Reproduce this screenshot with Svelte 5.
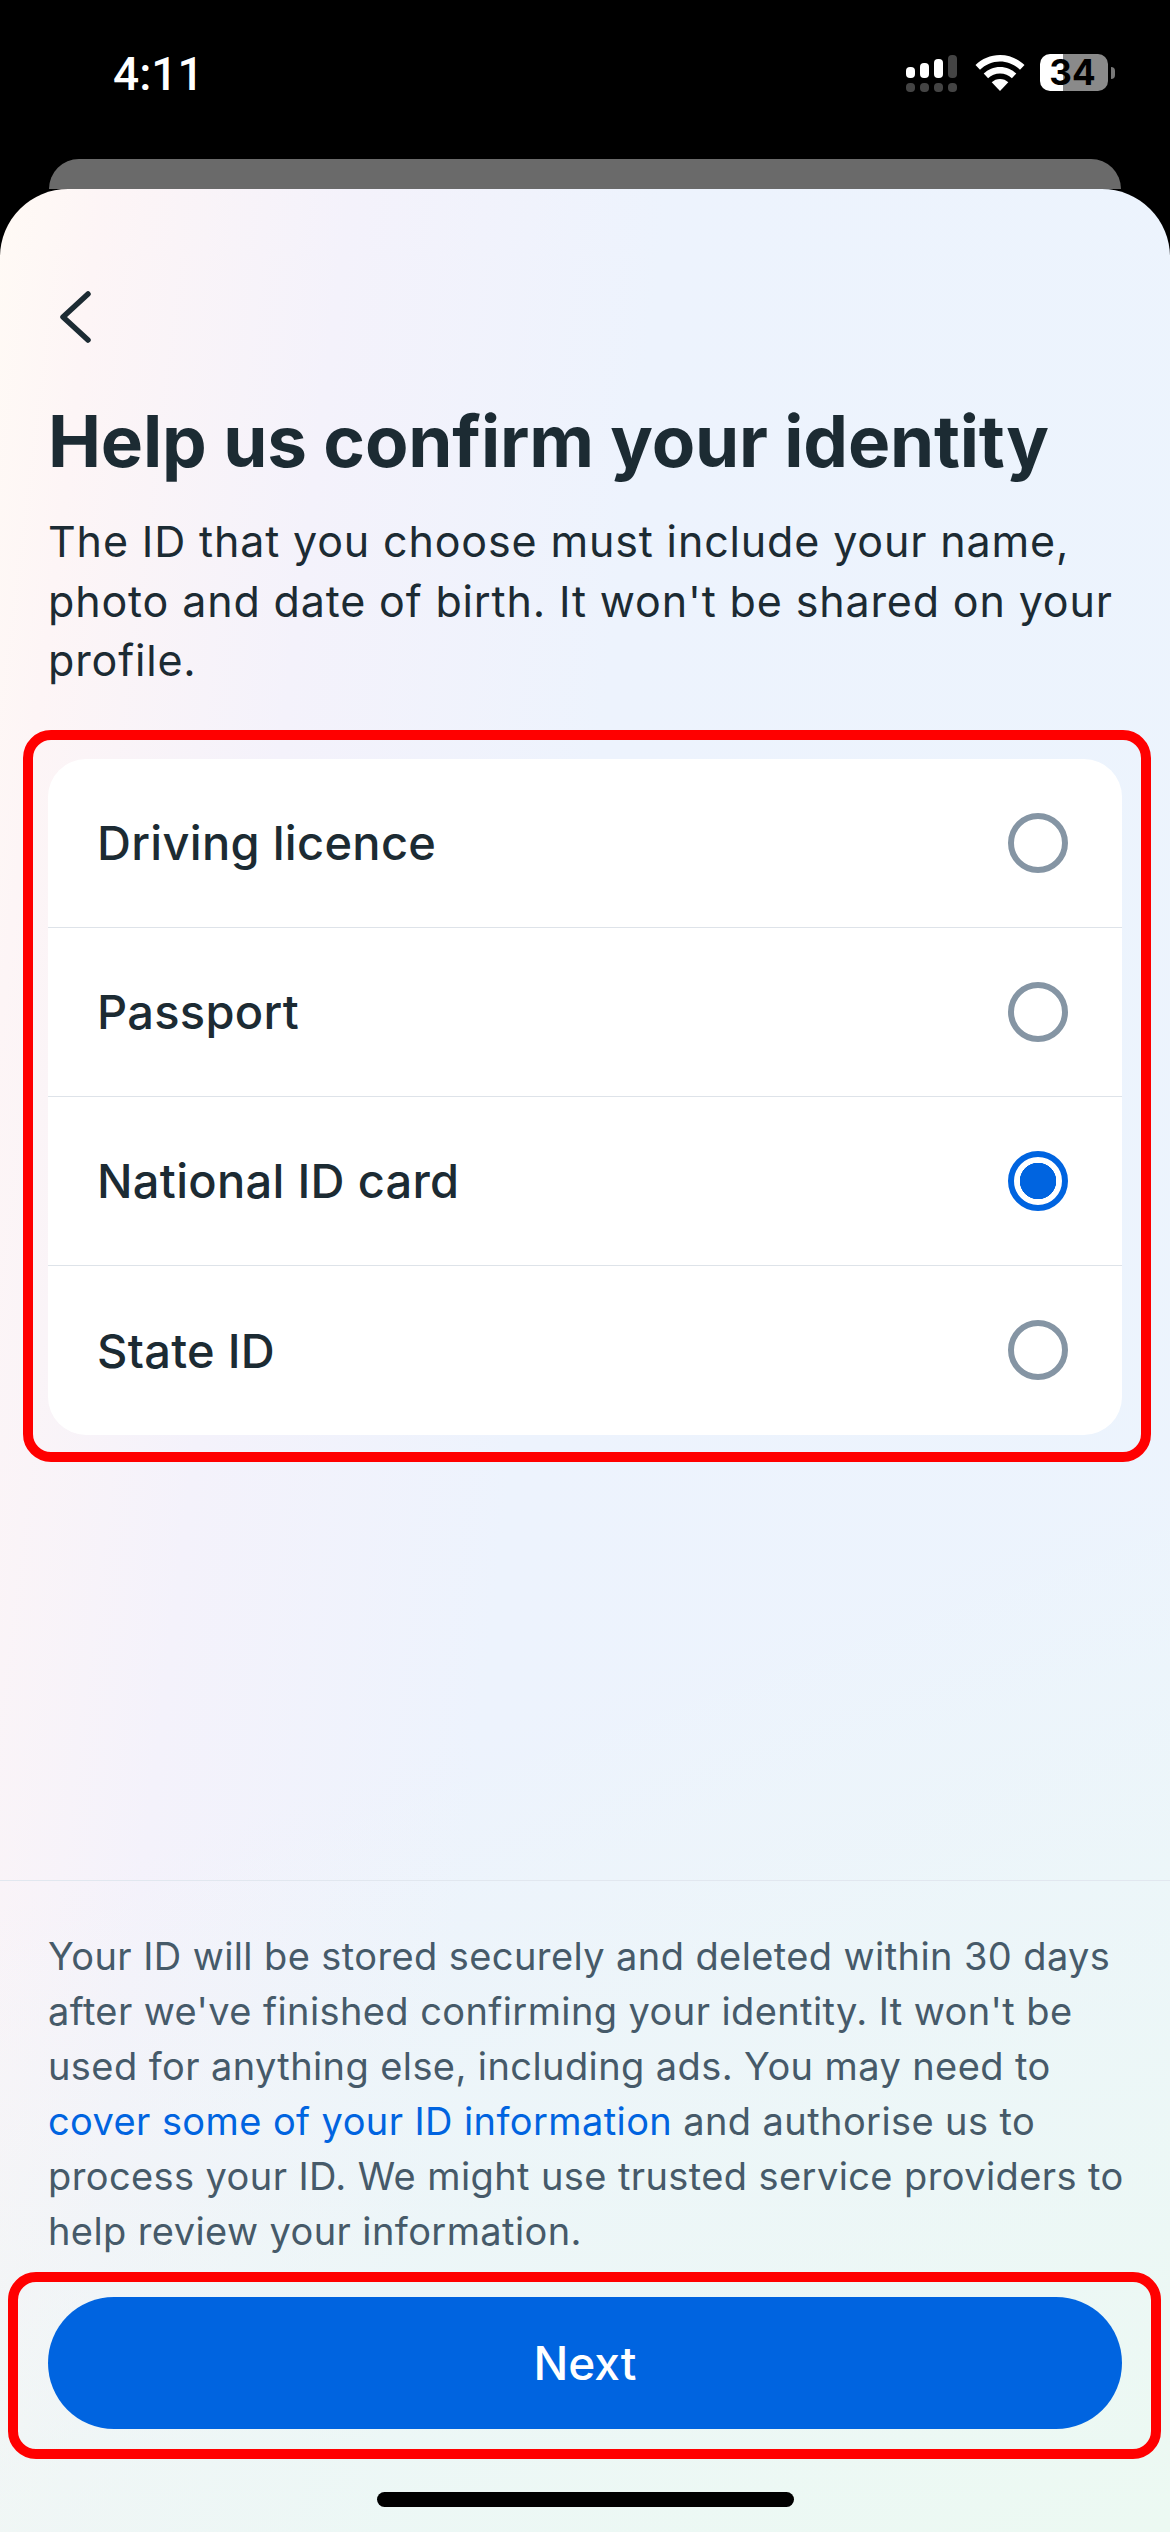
<script>
	let selected = $state('National ID card');
	const options = ['Driving licence', 'Passport', 'National ID card', 'State ID'];
</script>

<div class="screen">
	<header class="status">
		<span class="time">4:11</span>
		<div class="status-icons">
			<svg width="52" height="37" viewBox="0 0 52 37">
				<rect x="0" y="12" width="9" height="11" rx="4" fill="#fff" />
				<rect x="14" y="8" width="9" height="15" rx="4" fill="#fff" />
				<rect x="28" y="4" width="9" height="19" rx="4" fill="#fff" />
				<rect x="42" y="0" width="9" height="23" rx="4" fill="#444" />
				<rect x="0" y="28" width="9" height="9" rx="4" fill="#444" />
				<rect x="14" y="28" width="9" height="9" rx="4" fill="#444" />
				<rect x="28" y="28" width="9" height="9" rx="4" fill="#444" />
				<rect x="42" y="28" width="9" height="9" rx="4" fill="#444" />
			</svg>
			<svg class="wifi" width="50" height="36" viewBox="0 0 50 36">
				<path d="M25 0C15.500 0 7 3.800 0.500 10L5 14.800C10.300 9.700 17.300 6.500 25 6.500S39.700 9.700 45 14.800L49.500 10C43 3.800 34.500 0 25 0Z" fill="#fff" />
				<path d="M25 12C18.700 12 13 14.500 8.700 18.600L13.100 23.300C16.200 20.300 20.400 18.400 25 18.400S33.800 20.300 36.900 23.300L41.300 18.600C37 14.500 31.300 12 25 12Z" fill="#fff" />
				<path d="M25 24C21.800 24 18.900 25.200 16.700 27.300L25 36L33.300 27.300C31.100 25.200 28.200 24 25 24Z" fill="#fff" />
			</svg>
			<div class="battery">
				<div class="battery-body"><span>34</span></div>
				<div class="battery-nub"></div>
			</div>
		</div>
	</header>

	<div class="back-sheet"></div>

	<main class="sheet">
		<div class="content">
			<button class="back" aria-label="Back">
				<svg width="34" height="52" viewBox="0 0 34 52">
					<path d="M30 3L5 26L30 49" fill="none" stroke="#1c2b33" stroke-width="5.500" stroke-linecap="round" stroke-linejoin="round" />
				</svg>
			</button>
			<h1>Help us confirm your identity</h1>
			<p class="intro">The ID that you choose must include your name,<br />photo and date of birth. It won't be shared on your<br />profile.</p>

			<div class="card">
				{#each options as option}
					<button class="row" onclick={() => (selected = option)}>
						<span>{option}</span>
						<span class="radio" class:on={selected === option}></span>
					</button>
				{/each}
			</div>
		</div>

		<footer class="footer">
			<p class="note">Your ID will be stored securely and deleted within 30 days<br />after we've finished confirming your identity. It won't be<br />used for anything else, including ads. You may need to<br /><span class="link">cover some of your ID information</span> and authorise us to<br />process your ID. We might use trusted service providers to<br />help review your information.</p>
			<button class="next">Next</button>
			<div class="home"></div>
		</footer>

		<div class="mark mark-list"></div>
		<div class="mark mark-next"></div>
	</main>
</div>

<style>
	:global(body) {
		margin: 0;
		background: #000;
	}

	.screen {
		width: 1170px;
		height: 2532px;
		background: #000;
		display: flex;
		flex-direction: column;
		overflow: hidden;
		font-family: Inter, "Noto Sans", sans-serif;
	}

	.status {
		height: 159px;
		flex: none;
		box-sizing: border-box;
		padding: 46px 55px 0 113px;
		display: flex;
		justify-content: space-between;
		align-items: flex-start;
		color: #fff;
	}

	.time {
		font-family: Roboto, sans-serif;
		font-size: 46px;
		font-weight: 500;
		line-height: 56px;
	}

	.status-icons {
		display: flex;
		align-items: flex-start;
		padding-top: 9px;
	}

	.wifi {
		margin-left: 17px;
	}

	.battery {
		display: flex;
		align-items: center;
		margin-left: 15px;
		margin-top: -1px;
	}

	.battery-body {
		width: 68px;
		height: 37px;
		border-radius: 10px;
		background: linear-gradient(90deg, #fff 0 23px, #8a8a8a 23px);
		color: #000;
		font-family: Inter, sans-serif;
		font-size: 35px;
		font-weight: 700;
		line-height: 37px;
		text-align: center;
	}

	.battery-body span {
		display: block;
		margin-right: 3px;
	}

	.battery-nub {
		width: 4px;
		height: 12px;
		margin-left: 3px;
		background: #777;
		border-radius: 0 6px 6px 0;
	}

	.back-sheet {
		height: 30px;
		flex: none;
		margin: 0 49px;
		background: #6a6a6a;
		border-radius: 40px 40px 0 0;
	}

	.sheet {
		flex: 1;
		position: relative;
		display: flex;
		flex-direction: column;
		justify-content: space-between;
		border-radius: 68px 68px 0 0;
		background:
			linear-gradient(160deg, rgba(236, 249, 242, 0) 62%, #ecf9f2 100%),
			linear-gradient(97deg, #fffaf5 0%, #fdf5f6 7%, #f4f2fb 24%, #edf3fd 46%, #ecf4fd 100%);
	}

	.content {
		padding: 102px 48px 0;
	}

	.back {
		display: block;
		padding: 0;
		margin-left: 10px;
		height: 52px;
		border: none;
		background: none;
	}

	h1 {
		margin: 59px 0 0;
		font-size: 71px;
		line-height: 78px;
		font-weight: 700;
		letter-spacing: -0.2px;
		color: #1c2b33;
		white-space: nowrap;
	}

	.intro {
		margin: 32px 0 0;
		font-size: 43px;
		line-height: 59.500px;
		letter-spacing: 0.85px;
		color: #1c2b33;
	}

	.card {
		margin-top: 68px;
		background: #fff;
		border-radius: 38px;
		overflow: hidden;
	}

	.row {
		width: 100%;
		height: 169px;
		box-sizing: border-box;
		padding: 0 54px 0 49px;
		display: flex;
		justify-content: space-between;
		align-items: center;
		border: none;
		border-bottom: 1px solid #dee3e9;
		background: none;
		font: inherit;
		font-size: 47px;
		font-weight: 500;
		letter-spacing: 0.3px;
		color: #1c2b33;
	}

	.row:last-child {
		border-bottom: none;
	}

	.radio {
		width: 60px;
		height: 60px;
		box-sizing: border-box;
		border: 6px solid #8595a4;
		border-radius: 50%;
	}

	.radio.on {
		border-color: #0064e0;
		background: radial-gradient(circle, #0064e0 0 18px, #fff 18.500px);
	}

	.footer {
		border-top: 1px solid #e1e7ef;
		padding: 48px 48px 0;
		height: 652px;
		box-sizing: border-box;
	}

	.note {
		margin: 0;
		font-size: 38px;
		line-height: 55px;
		letter-spacing: 0.4px;
		color: #465a69;
		white-space: nowrap;
	}

	.link {
		color: #0064e0;
	}

	.next {
		display: block;
		width: 100%;
		height: 132px;
		margin-top: 38px;
		border: none;
		border-radius: 66px;
		background: #0064e0;
		color: #fff;
		font: inherit;
		font-size: 46px;
		font-weight: 500;
	}

	.home {
		width: 417px;
		height: 15px;
		margin: 63px auto 0;
		border-radius: 8px;
		background: #000;
	}

	.mark {
		position: absolute;
		box-sizing: border-box;
		border: 10px solid #ff0000;
		border-radius: 28px;
		pointer-events: none;
	}

	.mark-list {
		left: 23px;
		top: 541px;
		width: 1128px;
		height: 732px;
	}

	.mark-next {
		left: 8px;
		top: 2083px;
		width: 1153px;
		height: 187px;
	}
</style>
